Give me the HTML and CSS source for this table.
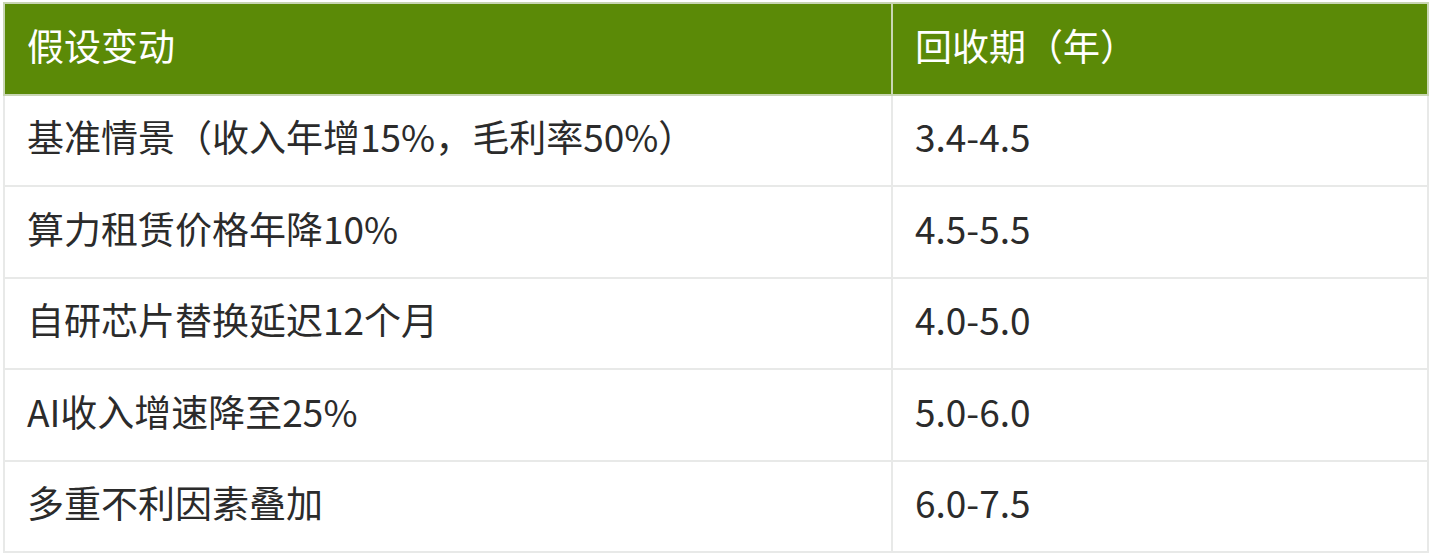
FILE: index.html
```html
<!DOCTYPE html>
<html lang="zh-CN">
<head>
<meta charset="utf-8">
<title>回收期敏感性分析</title>
<link rel="stylesheet" href="styles.css">
</head>
<body>
<table class="sens">
  <thead>
    <tr><th class="c1">假设变动</th><th class="c2">回收期（年）</th></tr>
  </thead>
  <tbody>
    <tr><td>基准情景（收入年增15%，毛利率50%）</td><td>3.4-4.5</td></tr>
    <tr><td>算力租赁价格年降10%</td><td>4.5-5.5</td></tr>
    <tr><td>自研芯片替换延迟12个月</td><td>4.0-5.0</td></tr>
    <tr><td>AI收入增速降至25%</td><td>5.0-6.0</td></tr>
    <tr><td>多重不利因素叠加</td><td>6.0-7.5</td></tr>
  </tbody>
</table>
</body>
</html>
```
FILE: styles.css
```css
html, body { background: #ffffff; }
body {
  margin: 2px 0 0 3px;
  font-family: "Noto Sans CJK SC", "Noto Sans", sans-serif;
  color: #2b2b2b;
}
.sens {
  border-collapse: collapse;
  width: 1426px;
  table-layout: fixed;
}
.sens th, .sens td {
  border: 2px solid #e8e9e8;
  height: 91.5px;
  padding: 0 22px 8px;
  font-size: 37px;
  line-height: 1.2;
  text-align: left;
  vertical-align: middle;
  box-sizing: border-box;
}
.sens th {
  background: #5b8a07;
  color: #ffffff;
  font-weight: normal;
  border-color: #c9d6b4;
}
.sens .c1 { width: 888px; }
```
